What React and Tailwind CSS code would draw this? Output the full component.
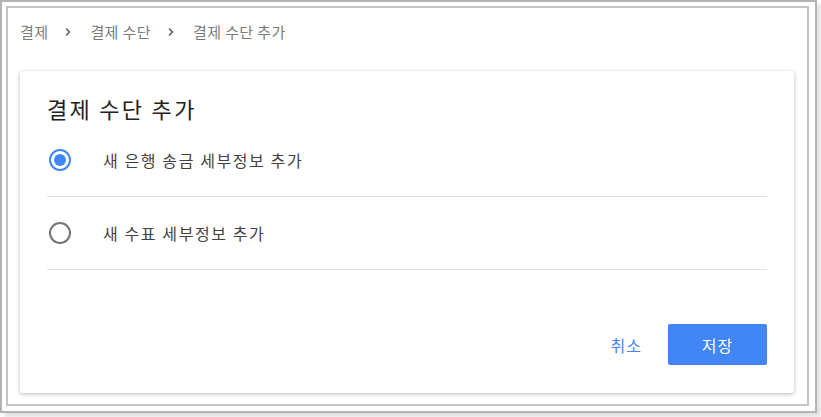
import React, { useState } from "react";

const Chevron = () => (
  <svg width="8" height="10" viewBox="0 0 8 10" className="ml-[16px] mr-[18px]">
    <path d="M2 1.5 L5.5 5 L2 8.5" fill="none" stroke="#616161" strokeWidth="1.6" />
  </svg>
);

const Radio = ({ checked }) =>
  checked ? (
    <div className="w-[22px] h-[22px] rounded-full border-2 border-[#4285f4] flex items-center justify-center">
      <div className="w-[12px] h-[12px] rounded-full bg-[#4285f4]" />
    </div>
  ) : (
    <div className="w-[22px] h-[22px] rounded-full border-2 border-[#757575]" />
  );

const App = () => {
  const [choice, setChoice] = useState("bank");

  const options = [
    { id: "bank", label: "새 은행 송금 세부정보 추가" },
    { id: "check", label: "새 수표 세부정보 추가" },
  ];

  return (
    <div className="w-[821px] h-[417px] bg-white font-['Noto_Sans_CJK_KR','Noto_Sans',sans-serif]">
      <div className="w-[817px] h-[413px] border-2 border-[#b4b4b4] shadow-[4px_4px_4px_rgba(0,0,0,0.12)] pt-[4px] pl-[4px]">
        <div className="w-[803px] h-[400px] border-2 border-[#c4c4c4] pl-[12px] pt-[13px]">
          {/* breadcrumb */}
          <div className="flex items-center h-[22px] text-[15px] tracking-[0.4px] text-[#7a7a7a]">
            <span>결제</span>
            <Chevron />
            <span>결제 수단</span>
            <Chevron />
            <span>결제 수단 추가</span>
          </div>

          {/* card */}
          <div className="mt-[28px] w-[774px] h-[322px] bg-white rounded-[3px] shadow-[0_1px_4px_rgba(0,0,0,0.28)] px-[27px] pt-[23px] flex flex-col">
            <h1 className="text-[22px] leading-[28px] tracking-[2.3px] text-[#212121]">결제 수단 추가</h1>

            <div className="mt-[2px]">
              {options.map((opt) => (
                <button
                  key={opt.id}
                  onClick={() => setChoice(opt.id)}
                  className="w-full h-[73px] flex items-center border-b border-[#e0e0e0] text-left"
                >
                  <div className="ml-[2px]">
                    <Radio checked={choice === opt.id} />
                  </div>
                  <span className="ml-[32px] text-[16px] tracking-[1.6px] text-[#424242]">{opt.label}</span>
                </button>
              ))}
            </div>

            <div className="flex justify-end items-center mt-[54px]">
              <button className="text-[16px] tracking-[1px] text-[#4285f4] mr-[26px]">취소</button>
              <button className="w-[99px] h-[41px] rounded-[2px] bg-[#4285f4] text-white text-[16px] tracking-[1px]">
                저장
              </button>
            </div>
          </div>
        </div>
      </div>
    </div>
  );
};

export default App;
